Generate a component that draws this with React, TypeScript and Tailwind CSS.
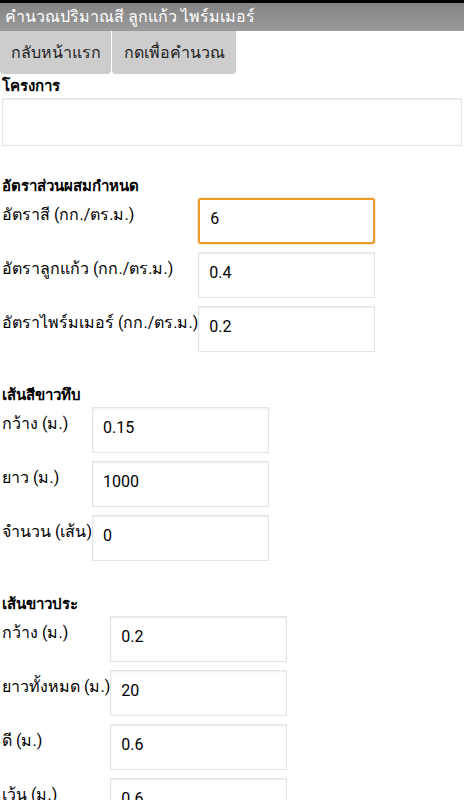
const font = { fontFamily: 'Roboto, "Noto Sans", "DejaVu Sans", sans-serif' };

type Row = { label: string; value: string; focused?: boolean };

function Field({ value, focused }: { value: string; focused?: boolean }) {
  return (
    <input
      readOnly
      defaultValue={value}
      className={`h-[46px] w-[177px] bg-white pb-[6px] pl-[10px] text-[16px] text-black outline-none ${
        focused
          ? 'rounded-[3px] border-2 border-[#eb9a2c] pl-[9px] shadow-[0_0_2px_#f0b060]'
          : 'border border-[#e4e4e4] shadow-[inset_0_1px_2px_rgba(0,0,0,0.08)]'
      }`}
    />
  );
}

function Section({ title, rows, top }: { title: string; rows: Row[]; top: string }) {
  return (
    <div className={top}>
      <h2 className="mb-[2px] text-[15px] font-bold leading-[20px] text-black">{title}</h2>
      <table className="border-collapse">
        <tbody>
          {rows.map((r) => (
            <tr key={r.label}>
              <td className="whitespace-nowrap pt-[6px] align-top text-[16px] leading-[22px] text-black">{r.label}</td>
              <td className="pb-[8px] align-top">
                <Field value={r.value} focused={r.focused} />
              </td>
            </tr>
          ))}
        </tbody>
      </table>
    </div>
  );
}

export default function App() {
  return (
    <div className="min-h-[800px] w-[464px] bg-white" style={font}>
      <div className="h-[3px] bg-black" />
      <div className="flex h-[28px] items-center bg-gradient-to-b from-[#838383] to-[#9b9b9b] px-[5px] text-[16px] text-white">
        คำนวณปริมาณสี ลูกแก้ว ไพร์มเมอร์
      </div>
      <div className="flex gap-[1px]">
        <button className="h-[43px] w-[111px] rounded-b-[4px] bg-[#cdcdcd] text-[16px] text-[#222]">กลับหน้าแรก</button>
        <button className="h-[43px] w-[124px] rounded-b-[4px] bg-[#cdcdcd] text-[16px] text-[#222]">กดเพื่อคำนวณ</button>
      </div>
      <div className="px-[2px]">
        <h2 className="mt-[2px] text-[15px] font-bold leading-[20px] text-black">โครงการ</h2>
        <input readOnly className="mt-[2px] h-[48px] w-full border border-[#e4e4e4] bg-white shadow-[inset_0_1px_2px_rgba(0,0,0,0.08)] outline-none" />
        <Section
          top="mt-[30px]"
          title="อัตราส่วนผสมกำหนด"
          rows={[
            { label: 'อัตราสี (กก./ตร.ม.)', value: '6', focused: true },
            { label: 'อัตราลูกแก้ว (กก./ตร.ม.)', value: '0.4' },
            { label: 'อัตราไพร์มเมอร์ (กก./ตร.ม.)', value: '0.2' },
          ]}
        />
        <Section
          top="mt-[25px]"
          title="เส้นสีขาวทึบ"
          rows={[
            { label: 'กว้าง (ม.)', value: '0.15' },
            { label: 'ยาว (ม.)', value: '1000' },
            { label: 'จำนวน (เส้น)', value: '0' },
          ]}
        />
        <Section
          top="mt-[25px]"
          title="เส้นขาวประ"
          rows={[
            { label: 'กว้าง (ม.)', value: '0.2' },
            { label: 'ยาวทั้งหมด (ม.)', value: '20' },
            { label: 'ดี (ม.)', value: '0.6' },
            { label: 'เว้น (ม.)', value: '0.6' },
          ]}
        />
      </div>
    </div>
  );
}
